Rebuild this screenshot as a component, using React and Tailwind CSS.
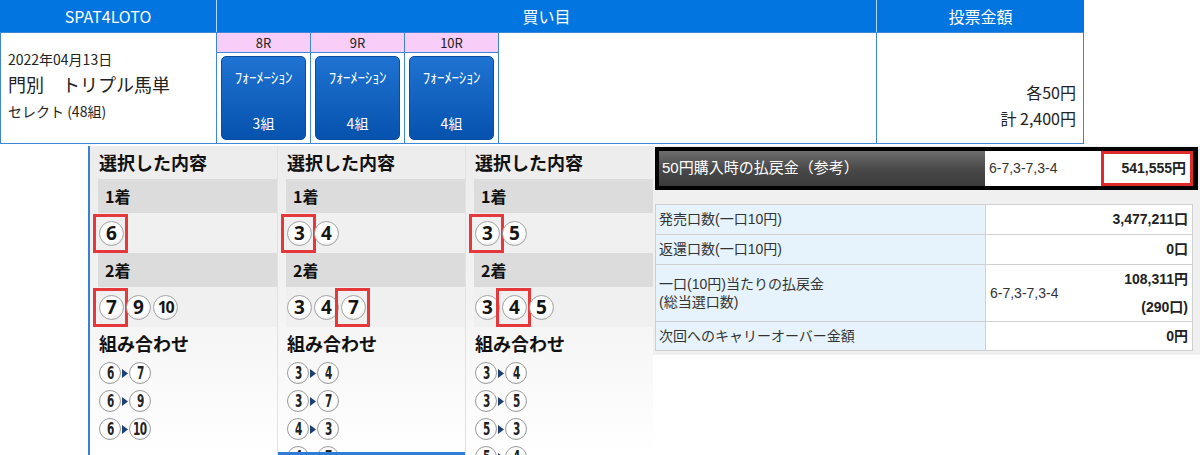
import React from "react";

const JP = "font-['Noto_Sans_CJK_JP','Noto_Sans',sans-serif]";
const AR = "font-['Liberation_Sans','Noto_Sans_CJK_JP',sans-serif]";

function Ball({ n, sel }) {
  const big = n >= 10;
  return (
    <span className="relative inline-flex shrink-0">
      <span
        className={
          "w-[25px] h-[25px] rounded-full border border-[#a3a3a3] bg-[radial-gradient(circle_at_45%_40%,#ffffff_55%,#d9d9d9_100%)] flex items-center justify-center font-bold text-[#151515] leading-none font-['Noto_Sans',sans-serif] " +
          (big ? "text-[16px] tracking-[-1.5px]" : "text-[19px]")
        }
      >
        {n}
      </span>
      {sel && (
        <span className="absolute -left-[6px] -right-[4px] -top-[7px] -bottom-[7px] border-[3px] border-[#e5383b]" />
      )}
    </span>
  );
}

function CBall({ n }) {
  return (
    <span className="w-[22px] h-[22px] rounded-full border-[1.5px] border-[#9a9a9a] bg-[radial-gradient(circle_at_45%_40%,#ffffff_60%,#e2e2e2_100%)] flex items-center justify-center shrink-0">
      <span className="inline-block scale-x-[0.62] text-[17px] font-semibold leading-none text-[#222] font-['DejaVu_Sans',sans-serif] tracking-[-1px]">
        {n}
      </span>
    </span>
  );
}

function Arrow() {
  return (
    <svg width="6" height="9" viewBox="0 0 6 9" className="mx-[1px] shrink-0">
      <path d="M0 0 L6 4.5 L0 9Z" fill="#1d3f73" />
    </svg>
  );
}

function Panel({ first, firstSel, second, secondSel, combos, leftLine, bottomBar, w }) {
  return (
    <div
      className={
        "relative h-[309px] overflow-hidden bg-linear-to-b from-[#ececec] via-[#f3f3f3] to-white pl-[8px] " +
        w +
        (leftLine ? " border-l-[2px] border-[#3a7fd2]" : " border-l border-[#e2e2e2]")
      }
    >
      <div className={"h-[33px] flex items-center pl-[1px] text-[18px] font-bold text-[#111] " + JP}>
        選択した内容
      </div>
      <div className={"h-[34px] flex items-center pl-[7px] bg-[#dcdcdc] text-[16px] font-bold text-[#111] " + JP}>
        1着
      </div>
      <div className="h-[40px] flex items-center gap-[2px] pl-[1px] bg-[#f0f0f0]">
        {first.map((n, i) => (
          <Ball key={i} n={n} sel={i === firstSel} />
        ))}
      </div>
      <div className={"h-[34px] flex items-center pl-[7px] bg-[#dcdcdc] text-[16px] font-bold text-[#111] " + JP}>
        2着
      </div>
      <div className="h-[40px] flex items-center gap-[2px] pl-[1px] bg-[#f0f0f0]">
        {second.map((n, i) => (
          <Ball key={i} n={n} sel={i === secondSel} />
        ))}
      </div>
      <div className={"h-[32px] flex items-center pl-[1px] text-[18px] font-bold text-[#111] " + JP}>
        組み合わせ
      </div>
      {combos.map((c, i) => (
        <div key={i} className="h-[28px] flex items-center pl-[1px]">
          <CBall n={c[0]} />
          <Arrow />
          <CBall n={c[1]} />
        </div>
      ))}
      {bottomBar && <div className="absolute left-0 right-0 bottom-0 h-[3px] bg-[#2f7ed6]" />}
    </div>
  );
}

function RaceCol({ r, kumi }) {
  return (
    <div className="w-[94px] h-full border-r border-[#3d86d8] flex flex-col">
      <div className={"h-[20px] bg-[#f8cdf8] border-b border-[#3d86d8] flex items-center justify-center text-[13px] text-[#222] " + JP}>
        {r}
      </div>
      <div className="flex-1 px-[4px] pt-[3px] pb-[3px]">
        <div className={"h-full rounded-[5px] border border-[#0b4c9e] bg-linear-to-b from-[#1f73d2] to-[#0652ae] flex flex-col items-center text-white " + JP}>
          <div className="mt-[10px] text-[15px] leading-[19px] tracking-[-0.3px]">ﾌｫｰﾒｰｼｮﾝ</div>
          <div className="mt-auto mb-[7px] text-[14px] leading-[18px]">{kumi}</div>
        </div>
      </div>
    </div>
  );
}

export default function App() {
  return (
    <div className={"w-[1200px] h-[455px] bg-white overflow-hidden " + JP}>
      {/* top table */}
      <div className="w-[1084px] flex flex-col">
        <div className="h-[32px] flex bg-[#0275e1] text-white text-[16px]">
          <div className="w-[217px] border-r border-white/70 flex items-center justify-center">SPAT4LOTO</div>
          <div className="w-[660px] border-r border-white/70 flex items-center justify-center">買い目</div>
          <div className="w-[207px] flex items-center justify-center">投票金額</div>
        </div>
        <div className="h-[112px] flex bg-white border-t border-b border-[#3d86d8]">
          <div className="w-[217px] border-l border-r border-[#3d86d8] pl-[7px] pt-[15px] text-[#222]">
            <div className="text-[14px] leading-[22px]">2022年04月13日</div>
            <div className="text-[18px] leading-[26px] mt-[1px]">門別　トリプル馬単</div>
            <div className="text-[14px] leading-[22px] mt-[3px]">セレクト (48組)</div>
          </div>
          <div className="w-[660px] border-r border-[#3d86d8] flex">
            <RaceCol r="8R" kumi="3組" />
            <RaceCol r="9R" kumi="4組" />
            <RaceCol r="10R" kumi="4組" />
          </div>
          <div className="w-[207px] border-r border-[#3d86d8] flex flex-col items-end justify-end pr-[7px] pb-[12px] text-[16px] text-[#222]">
            <div className="leading-[26px]">各50円</div>
            <div className="leading-[26px]">計 2,400円</div>
          </div>
        </div>
      </div>

      {/* lower area */}
      <div className="flex mt-[2px]">
        <div className="w-[88px] shrink-0" />
        <Panel
          w="w-[189px]"
          leftLine
          first={[6]}
          firstSel={0}
          second={[7, 9, 10]}
          secondSel={0}
          combos={[[6, 7], [6, 9], [6, 10]]}
        />
        <Panel
          w="w-[188px]"
          bottomBar
          first={[3, 4]}
          firstSel={0}
          second={[3, 4, 7]}
          secondSel={2}
          combos={[[3, 4], [3, 7], [4, 3], [4, 7]]}
        />
        <Panel
          w="w-[188px]"
          first={[3, 5]}
          firstSel={0}
          second={[3, 4, 5]}
          secondSel={1}
          combos={[[3, 4], [3, 5], [5, 3], [5, 4]]}
        />
        {/* right panel */}
        <div className={"w-[547px] shrink-0 flex flex-col " + AR}>
          <div className="bg-[#f0f0f0] pt-[1px] pb-[2px]">
            <div className="ml-[2px] mr-[2px] h-[43px] bg-black p-[4px] pr-[5px] flex">
              <div className="w-[326px] bg-linear-to-b from-[#6e6e6e] via-[#4a4a4a] to-[#3a3a3a] flex items-center pl-[3px] text-white text-[15px]">
                50円購入時の払戻金（参考）
              </div>
              <div className="w-[116px] bg-white flex items-center pl-[4px] text-[14px] text-[#333]">
                6-7,3-7,3-4
              </div>
              <div className="flex-1 bg-white border-[3px] border-[#e02b2b] flex items-center justify-end pr-[4px] text-[14px] font-bold text-[#222]">
                541,555円
              </div>
            </div>
            <div className="h-[14px]" />
            <div className="ml-[2px] mr-[7px] border border-[#cfcfcf] bg-white text-[14px] text-[#333]">
              <div className="flex h-[30px] border-b border-[#cfcfcf]">
                <div className="w-[330px] bg-[#e6f3fc] border-r border-[#cfcfcf] flex items-center pl-[3px]">発売口数(一口10円)</div>
                <div className="flex-1 flex items-center justify-end pr-[4px] font-bold text-[#222]">3,477,211口</div>
              </div>
              <div className="flex h-[30px] border-b border-[#cfcfcf]">
                <div className="w-[330px] bg-[#e6f3fc] border-r border-[#cfcfcf] flex items-center pl-[3px]">返還口数(一口10円)</div>
                <div className="flex-1 flex items-center justify-end pr-[4px] font-bold text-[#222]">0口</div>
              </div>
              <div className="flex h-[57px] border-b border-[#cfcfcf]">
                <div className="w-[330px] bg-[#e6f3fc] border-r border-[#cfcfcf] flex flex-col justify-center pl-[3px] leading-[18px]">
                  <div>一口(10円)当たりの払戻金</div>
                  <div>(総当選口数)</div>
                </div>
                <div className="flex-1 flex items-center pl-[4px] pr-[4px]">
                  <div>6-7,3-7,3-4</div>
                  <div className="ml-auto flex flex-col items-end font-bold text-[#222] leading-[28px]">
                    <div>108,311円</div>
                    <div>(290口)</div>
                  </div>
                </div>
              </div>
              <div className="flex h-[28px]">
                <div className="w-[330px] bg-[#e6f3fc] border-r border-[#cfcfcf] flex items-center pl-[3px]">次回へのキャリーオーバー金額</div>
                <div className="flex-1 flex items-center justify-end pr-[4px] font-bold text-[#222]">0円</div>
              </div>
            </div>
            <div className="h-[2px]" />
          </div>
          <div className="flex-1 bg-white" />
        </div>
      </div>
    </div>
  );
}
